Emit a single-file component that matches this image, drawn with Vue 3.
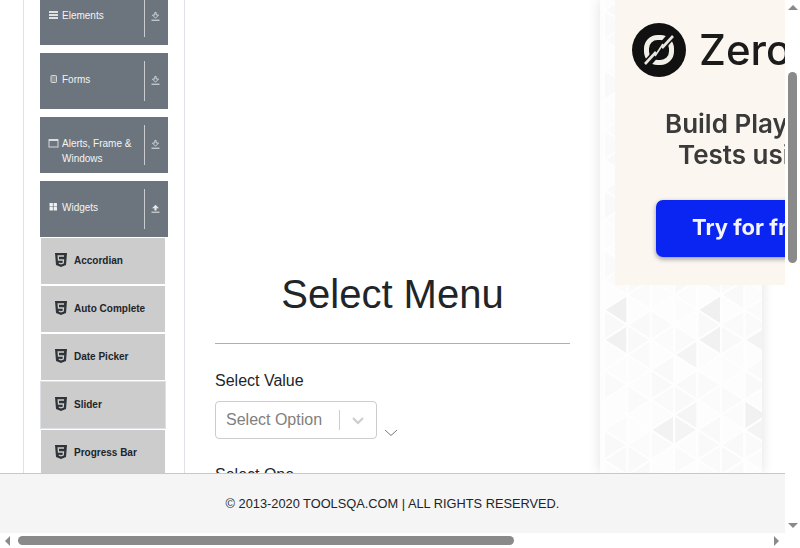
<script setup>
const groups = [
  { name: 'Elements', icon: 'bars', open: false },
  { name: 'Forms', icon: 'tablet', open: false },
  { name: 'Alerts, Frame & Windows', icon: 'window', open: false },
  { name: 'Widgets', icon: 'grid', open: true },
]
const widgets = ['Accordian', 'Auto Complete', 'Date Picker', 'Slider', 'Progress Bar']

const colX = [0, 1, 2, 3, 4, 5, 6, 7].map((i) => 4 + i * 23.4)
const dark = {
  'L0-310': '#f0f0f0', 'R0-310': '#f1f1f1', 'L0-340': '#f1f1f1', 'L4-310': '#f0f0f0',
  'L4-340': '#f1f1f1', 'L6-340': '#f3f3f3', 'L3-355': '#f4f4f4', 'R6-340': '#f6f6f6',
  'L2-430': '#f2f2f2', 'R3-430': '#f4f4f4', 'L3-415': '#f5f5f5', 'R6-415': '#f1f1f1',
  'L6-430': '#f4f4f4', 'R6-310': '#f7f7f7', 'L3-265': '#f8f8f8',
}
const shadesA = ['#fbfbfb', '#fafafa', '#fdfdfd', '#f9f9f9', '#fcfcfc']
const shadesB = ['#fcfcfc', '#fafafa', '#fdfdfd', '#f9f9f9']
const triangles = []
for (let c = 0; c < 7; c++) {
  const base = c % 2 === 0 ? 310 : 295
  for (let k = -11; k < 7; k++) {
    const yl = base + k * 30
    const yr = yl + 15
    const x1 = colX[c]
    const x2 = colX[c + 1]
    const keyL = `L${c}-${yl}`
    const keyR = `R${c}-${yr}`
    const h1 = (c * 7 + (k + 11) * 13) % 5
    const h2 = (c * 11 + (k + 11) * 5) % 4
    triangles.push({
      key: keyL,
      points: `${x1},${yl} ${x2},${yl - 15} ${x2},${yl + 15}`,
      fill: dark[keyL] || shadesA[h1],
    })
    triangles.push({
      key: keyR,
      points: `${x2},${yr} ${x1},${yr - 15} ${x1},${yr + 15}`,
      fill: dark[keyR] || shadesB[h2],
    })
  }
}
</script>

<template>
  <div class="page">
    <div class="content">
      <div class="main">
        <aside class="sidebar">
          <div class="group-list">
            <template v-for="g in groups" :key="g.name">
              <div class="group">
                <div class="group-label">
                  <svg class="g-icon" width="11" height="10" viewBox="0 0 11 10">
                    <g v-if="g.icon === 'bars'" fill="#dfe2e4">
                      <rect x="1" y="1" width="9" height="2" />
                      <rect x="1" y="4" width="9" height="2" />
                      <rect x="1" y="7" width="9" height="2" />
                    </g>
                    <rect v-else-if="g.icon === 'tablet'" x="3" y="1.5" width="5.5" height="7" rx="0.8" fill="#8b9299" stroke="#d5d8da" />
                    <g v-else-if="g.icon === 'window'">
                      <rect x="1" y="1.5" width="9" height="7.5" fill="none" stroke="#d5d8da" />
                      <rect x="1" y="1" width="9" height="2" fill="#dcdfe1" />
                    </g>
                    <g v-else fill="#eef0f1">
                      <rect x="1.5" y="1" width="3.4" height="3.4" rx="0.5" />
                      <rect x="5.6" y="1" width="3.4" height="3.4" rx="0.5" />
                      <rect x="1.5" y="5" width="3.4" height="3.6" rx="0.5" />
                      <rect x="5.6" y="5" width="3.4" height="3.6" rx="0.5" />
                    </g>
                  </svg>
                  <span class="g-text">{{ g.name }}</span>
                </div>
                <span class="g-sep"></span>
                <span class="g-arrow">
                  <svg width="9" height="9" viewBox="0 0 9 9">
                    <path v-if="g.open" d="M4.5 0.8 L8 4.2 H5.6 V6.4 H3.4 V4.2 H1 Z" fill="#e4e6e8" />
                    <path v-else d="M4.5 6.2 L1.4 3 H3.8 V0.5 H5.2 V3 H7.6 Z" fill="none" stroke="#dfe2e4" stroke-width="0.8" />
                    <rect x="0.5" y="7.7" width="8" height="1" fill="#e4e6e8" />
                  </svg>
                </span>
              </div>
              <div v-if="g.open" class="sub-list">
                <div v-for="w in widgets" :key="w" class="sub-item" :class="{ hovered: w === 'Slider' }">
                  <svg width="12" height="14" viewBox="0 0 12 14">
                    <path d="M0 0 H12 L11 12 L6 14 L1 12 Z" fill="#2f343a" />
                    <path d="M9 3 H3.2 L3.5 7 H8.5 L8.2 10 L6 10.8 L3.8 10" fill="none" stroke="#ccc" stroke-width="1.3" />
                  </svg>
                  <span>{{ w }}</span>
                </div>
              </div>
            </template>
          </div>
        </aside>

        <section class="center">
          <h1 class="title">Select Menu</h1>
          <div class="field-label">Select Value</div>
          <div class="select-row">
            <div class="select">
              <span class="placeholder">Select Option</span>
              <span class="select-sep"></span>
              <svg class="select-chev" width="14" height="9" viewBox="0 0 14 9">
                <path d="M2 2 L7 7 L12 2" fill="none" stroke="#ccc" stroke-width="2" />
              </svg>
            </div>
            <svg class="native-chev" width="14" height="8" viewBox="0 0 14 8">
              <path d="M1 1 L7 6.5 L13 1" fill="none" stroke="#777" stroke-width="1" />
            </svg>
          </div>
          <div class="field-label second">Select One</div>
        </section>

        <aside class="right">
          <div class="pattern">
            <svg class="pattern-art" width="162" height="473" viewBox="0 0 162 473">
              <polygon
                v-for="t in triangles"
                :key="t.key"
                :points="t.points"
                :fill="t.fill"
                stroke="#fefefe"
                stroke-width="2"
              />
            </svg>
            <div class="ad">
              <div class="ad-brand">
                <svg width="54" height="54" viewBox="0 0 54 54">
                  <circle cx="27" cy="27" r="27" fill="#111" />
                  <rect x="14.5" y="14.5" width="25" height="25" rx="11" fill="none" stroke="#f3efe9" stroke-width="5" />
                  <path d="M41 11 L13 43" stroke="#111" stroke-width="8" />
                  <path d="M41 13 L30 25 M24 29 L13 41" stroke="#e9e5df" stroke-width="2.6" />
                  <path d="M31 21 L23 33" stroke="#e9e5df" stroke-width="1.6" />
                </svg>
                <span class="ad-name">Zerostep</span>
              </div>
              <div class="ad-line one">Build Playwright</div>
              <div class="ad-line two">Tests using AI</div>
              <div class="ad-btn">Try for free today</div>
            </div>
          </div>
        </aside>
      </div>
      <footer class="footer">© 2013-2020 TOOLSQA.COM | ALL RIGHTS RESERVED.</footer>
    </div>

    <div class="vbar">
      <span class="arrow up"></span>
      <span class="vthumb"></span>
      <span class="arrow down"></span>
    </div>
    <div class="hbar">
      <span class="arrow left"></span>
      <span class="hthumb"></span>
      <span class="arrow right"></span>
    </div>
    <div class="corner"></div>
  </div>
</template>

<style>
html, body { margin: 0; overflow: hidden; background: #fff; }
</style>

<style scoped>
.page {
  width: 800px;
  height: 548px;
  display: grid;
  grid-template-columns: 785px 15px;
  grid-template-rows: 533px 15px;
  overflow: hidden;
  font-family: "Liberation Sans", Arial, sans-serif;
  color: #212529;
  background: #fff;
}
.content { display: flex; flex-direction: column; min-height: 0; overflow: hidden; }
.main { height: 473px; display: flex; overflow: hidden; flex: none; }
.sidebar {
  flex: none;
  box-sizing: border-box;
  width: 162px;
  margin-left: 23px;
  border-left: 1px solid #dee2e6;
  border-right: 1px solid #dee2e6;
  padding-left: 16px;
}
.group-list { margin-top: -11px; display: flex; flex-direction: column; gap: 8px; }
.group {
  width: 128px;
  height: 56px;
  box-sizing: border-box;
  padding: 8px 0;
  background: #6c757d;
  display: flex;
  color: #f2f4f5;
  font-size: 10px;
  line-height: 15px;
}
.group-label { flex: none; width: 104px; box-sizing: border-box; display: flex; padding: 11px 0 0 8px; }
.g-icon { flex: none; margin: 2px 3px 0 0; }
.g-text { display: block; width: 76px; }
.g-sep { width: 1px; background: #c9cccf; flex: none; }
.g-arrow { width: 23px; padding: 0 2px 2px 0; box-sizing: border-box; flex: none; display: flex; align-items: center; justify-content: center; }
.sub-list { display: flex; flex-direction: column; gap: 2px; margin: -7px 0 0 1px; }
.sub-item {
  width: 124px;
  height: 46px;
  box-sizing: border-box;
  padding: 0 0 2px 14px;
  background: #ccc;
  display: flex;
  align-items: center;
  gap: 7px;
  font-size: 10px;
  font-weight: 700;
  color: #212529;
}
.sub-item.hovered { box-shadow: 0 0 0 1px #dde1e6; }
.center { flex: none; width: 355px; margin: 0 30px; }
.title {
  margin: 270px 0 0;
  padding-bottom: 25px;
  border-bottom: 1px solid #adb0b3;
  font-size: 40px;
  line-height: 48px;
  font-weight: 400;
  text-align: center;
}
.field-label { margin-top: 27px; font-size: 16px; line-height: 19px; }
.field-label.second { margin-top: 26px; }
.select-row { display: flex; margin-top: 11px; align-items: flex-end; }
.select {
  box-sizing: border-box;
  width: 162px;
  height: 38px;
  border: 1px solid #ccc;
  border-radius: 4px;
  display: flex;
  align-items: center;
  padding-left: 10px;
}
.placeholder { font-size: 16px; color: #808080; width: 113px; flex: none; }
.select-sep { width: 1px; height: 20px; background: #ccc; flex: none; }
.select-chev { margin-left: 11px; }
.native-chev { margin: 0 0 2px 7px; }
.right { flex: none; width: 162px; }
.pattern {
  position: relative;
  width: 162px;
  height: 473px;
  background: #fdfdfd;
  box-shadow: 0 0 12px rgba(0, 0, 0, 0.12);
}
.pattern-art { position: absolute; left: 0; top: 0; filter: blur(0.6px); }
.ad {
  position: absolute;
  left: 15px;
  top: 0;
  width: 400px;
  height: 285px;
  background: #fbf6f0;
  color: #222;
  font-family: Inter, "Liberation Sans", sans-serif;
  filter: blur(0.5px);
}
.ad-brand { display: flex; align-items: center; gap: 13px; padding: 23px 0 0 17px; }
.ad-name { font-size: 42px; line-height: 54px; font-weight: 500; color: #1b1b1b; }
.ad-line { font-size: 26px; line-height: 31px; font-weight: 600; color: #3a3a3a; white-space: nowrap; }
.ad-line.one { margin: 31px 0 0 50px; }
.ad-line.two { margin-left: 63px; }
.ad-btn {
  margin: 30px 0 0 41px;
  width: 300px;
  height: 57px;
  box-sizing: border-box;
  padding-left: 36px;
  border-radius: 7px;
  background: #0a24f2;
  color: #f4f4ff;
  font-size: 22px;
  line-height: 54px;
  font-weight: 700;
  box-shadow: 0 2px 5px rgba(0, 0, 40, 0.4);
}
.footer {
  height: 60px;
  box-sizing: border-box;
  flex: none;
  border-top: 1px solid #c8c8c8;
  background: #f5f5f5;
  display: flex;
  align-items: center;
  justify-content: center;
  font-size: 12.8px;
  color: #212529;
}
.vbar { position: relative; background: #fff; }
.vthumb {
  position: absolute;
  left: 3px;
  top: 72px;
  width: 9px;
  height: 191px;
  border-radius: 5px;
  background: #8a8a8a;
}
.hbar { position: relative; background: #fff; }
.hthumb {
  position: absolute;
  left: 18px;
  top: 3px;
  width: 496px;
  height: 9px;
  border-radius: 5px;
  background: #8a8a8a;
}
.corner { background: #fff; }
.arrow { position: absolute; width: 0; height: 0; border-style: solid; border-color: transparent; }
.arrow.up { left: 3px; top: 5px; border-width: 0 5px 5px; border-bottom-color: #8a8a8a; }
.arrow.down { left: 3px; bottom: 5px; border-width: 5px 5px 0; border-top-color: #8a8a8a; }
.arrow.left { left: 5px; top: 3px; border-width: 5px 5px 5px 0; border-right-color: #8a8a8a; }
.arrow.right { left: 774px; top: 3px; border-width: 5px 0 5px 5px; border-left-color: #8a8a8a; }
</style>
